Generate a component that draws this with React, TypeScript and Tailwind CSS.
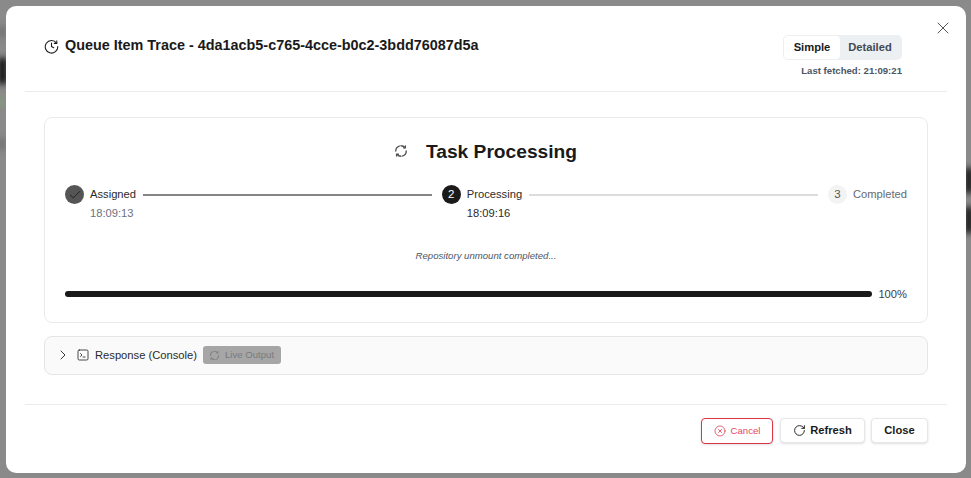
import React from 'react';
import { Check, ChevronRight, RotateCw, X, XCircle } from 'lucide-react';

const font = 'font-["Liberation_Sans",sans-serif]';

// near closed ring with tiny arrow heads, lucide's refresh icons are too open
const SpinIcon = ({ className }: { className: string }) => (
  <svg viewBox="0 0 24 24" fill="none" stroke="currentColor" strokeWidth="2.4" strokeLinecap="round" strokeLinejoin="round" className={className}>
    <path d="M3 12a9 9 0 0 1 6-8.5M12 3a9 9 0 0 1 7 3.4" />
    <path d="M21 12a9 9 0 0 1-6 8.5M12 21a9 9 0 0 1-7-3.4" />
    <path d="M19.5 3.5v3h-3" />
    <path d="M4.5 20.5v-3h3" />
  </svg>
);

const ClockIcon = ({ className }: { className: string }) => (
  <svg viewBox="0 0 24 24" fill="none" stroke="currentColor" strokeWidth="1.7" strokeLinecap="round" strokeLinejoin="round" className={className}>
    <path d="M20 6.5A10 10 0 1 0 22 12" />
    <path d="M20.5 3v4H16.5" />
    <path d="M12 6.5V12l3.5 2" />
  </svg>
);

const ConsoleIcon = ({ className }: { className: string }) => (
  <svg viewBox="0 0 24 24" fill="none" stroke="currentColor" strokeWidth="1.8" strokeLinecap="round" strokeLinejoin="round" className={className}>
    <rect x="2" y="2" width="20" height="20" rx="2.5" />
    <path d="m7 9 3 3-3 3" />
    <path d="M12 16h4" />
  </svg>
);

const Step = ({ badge, label, time, badgeClass, labelClass, timeClass }: {
  badge: React.ReactNode;
  label: string;
  time?: string;
  badgeClass: string;
  labelClass: string;
  timeClass?: string;
}) => (
  <div className="flex shrink-0 items-start">
    <div className={`flex h-[19px] w-[19px] items-center justify-center rounded-full text-[11.5px] ${badgeClass}`}>{badge}</div>
    <div className="ml-[6px]">
      <div className={`h-[19px] text-[11.2px] leading-[18px] ${labelClass}`}>{label}</div>
      {time && <div className={`text-[11.2px] leading-[18px] ${timeClass}`}>{time}</div>}
    </div>
  </div>
);

export default function App() {
  return (
    <div className={`${font} relative flex h-[478px] w-[971px] overflow-hidden bg-[#8a8a8a] pb-[5px] pl-[6px] pr-[5px] pt-[6px]`}>
      {/* blurred page showing behind the overlay */}
      <div className="absolute left-[-2px] top-[26px] h-[12px] w-[8px] bg-[#727272] blur-[3px]" />
      <div className="absolute left-[-2px] top-[58px] h-[26px] w-[9px] bg-[#111111] blur-[3px]" />
      <div className="absolute left-[-2px] top-[96px] h-[12px] w-[8px] bg-[#87967d] blur-[3px]" />
      <div className="absolute left-[-2px] top-[138px] h-[12px] w-[8px] bg-[#737373] blur-[3px]" />
      <div className="absolute right-[-2px] top-[168px] h-[25px] w-[8px] bg-[#111111] blur-[3px]" />
      <div className="absolute right-[-2px] top-[207px] h-[26px] w-[8px] bg-[#111111] blur-[3px]" />

      <div className="relative z-10 flex w-full flex-col rounded-[10px] bg-white px-[19px]">
        <div className="relative flex h-[86px] justify-between border-b border-[#ebebeb] pl-[19px] pr-[45px] pt-[29px]">
          <div className="mt-[1px] flex h-[20px] items-center gap-[6px]">
            <ClockIcon className="h-[15px] w-[15px] text-[#1a1a1a]" />
            <span className="text-[14.4px] font-bold text-[#1a1a1a]">Queue Item Trace - 4da1acb5-c765-4cce-b0c2-3bdd76087d5a</span>
          </div>
          <div className="flex flex-col items-end">
            <div className="flex h-[25px] w-[119px] rounded-[5px] bg-[#edf0f3] p-[1px]">
              <div className="flex w-[56px] items-center justify-center rounded-[4px] bg-white text-[11.2px] font-bold text-[#1a1a1a]">Simple</div>
              <div className="flex w-[60px] items-center justify-center text-[11.2px] font-bold text-[#434a54]">Detailed</div>
            </div>
            <div className="mt-[5px] text-[9.6px] font-bold leading-[12px] text-[#4b5563]">Last fetched: 21:09:21</div>
          </div>
          <X className="absolute right-[-6px] top-[12px] h-[20px] w-[20px] text-[#555]" strokeWidth={1.2} />
        </div>

        <div className="flex flex-1 flex-col px-[19px] pt-[25px]">
          <div className="flex h-[206px] flex-col rounded-[8px] border border-[#ebebeb] px-[20px]">
            <div className="mt-[21px] flex h-[27px] items-center justify-center gap-[18px] pr-[1px]">
              <SpinIcon className="mb-[3px] h-[14px] w-[14px] text-[#555]" />
              <span className="text-[19.2px] font-bold text-[#1a1a1a]">Task Processing</span>
            </div>
            <div className="mt-[19px] flex items-start">
              <Step
                badge={<Check className="h-[14px] w-[14px] text-[#1a1a1a]" strokeWidth={1.5} />}
                badgeClass="bg-[#555555]"
                label="Assigned"
                labelClass="text-[#2b2b2b]"
                time="18:09:13"
                timeClass="text-[#6b7280]"
              />
              <div className="ml-[7px] mr-[10px] mt-[9px] h-[2px] flex-1 bg-[#858585]" />
              <Step
                badge="2"
                badgeClass="bg-[#1a1a1a] text-white"
                label="Processing"
                labelClass="text-[#2b2b2b]"
                time="18:09:16"
                timeClass="text-[#2b2b2b]"
              />
              <div className="ml-[7px] mr-[10px] mt-[9px] h-[2px] flex-1 bg-[#dcdcdc]" />
              <Step
                badge="3"
                badgeClass="bg-[#f3f3f3] text-[#555]"
                label="Completed"
                labelClass="text-[#666a70]"
              />
            </div>
            <div className="mt-[28px] text-center text-[9.6px] italic leading-[12px] text-[#4b5563]">Repository unmount completed...</div>
            <div className="mt-[25px] flex items-center gap-[6px]">
              <div className="h-[6px] flex-1 rounded-full bg-[#1a1a1a]" />
              <span className="text-[11.2px] leading-[14px] text-[#404040]">100%</span>
            </div>
          </div>

          <div className="mt-[13px] flex h-[39px] items-center rounded-[8px] border border-[#e5e5e8] bg-[#fafafa] pl-[10px]">
            <ChevronRight className="-mt-[1px] h-[16px] w-[16px] text-[#1a1a1a]" strokeWidth={1.3} />
            <ConsoleIcon className="-mt-[1px] ml-[6px] h-[12px] w-[12px] text-[#333]" />
            <span className="ml-[6px] text-[11.2px] text-[#2b2b2b]">Response (Console)</span>
            <div className="-mt-[1px] ml-[6px] flex h-[18px] w-[78px] items-center gap-[5px] rounded-[3px] bg-[#a6a6a6] pl-[6px]">
              <SpinIcon className="h-[11px] w-[11px] text-[#858585]" />
              <span className="text-[9.6px] text-[#7a7a7a]">Live Output</span>
            </div>
          </div>
        </div>

        <div className="flex h-[69px] items-start justify-end gap-[6px] border-t border-[#ebebeb] pr-[19px] pt-[13px]">
          <button className="mr-[1px] flex h-[26px] w-[72px] items-center justify-center gap-[5px] rounded-[4px] border border-[#dc3545] bg-white text-[9.6px] text-[#e5485c] shadow-sm">
            <XCircle className="h-[12px] w-[12px]" strokeWidth={1.7} />
            Cancel
          </button>
          <button className="flex h-[25px] w-[85px] items-center justify-center gap-[4px] rounded-[4px] border border-[#e5e7eb] bg-white text-[11.2px] font-bold text-[#1a1a1a] shadow-sm">
            <RotateCw className="h-[13px] w-[13px]" strokeWidth={1.7} />
            Refresh
          </button>
          <button className="flex h-[25px] w-[57px] items-center justify-center rounded-[4px] border border-[#e5e7eb] bg-white text-[11.2px] font-bold text-[#1a1a1a] shadow-sm">Close</button>
        </div>
      </div>
    </div>
  );
}
